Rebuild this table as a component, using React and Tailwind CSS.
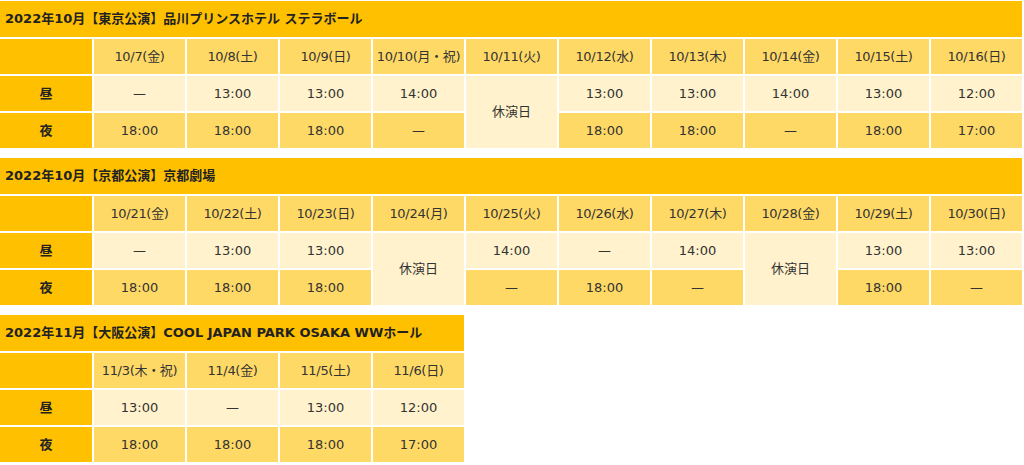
const tables = [
  {
    title: '2022年10月【東京公演】品川プリンスホテル ステラボール',
    cols: 'grid-cols-[92px_repeat(10,91px)]',
    width: 'w-[1022px]',
    dates: ['10/7(金)', '10/8(土)', '10/9(日)', '10/10(月・祝)', '10/11(火)', '10/12(水)', '10/13(木)', '10/14(金)', '10/15(土)', '10/16(日)'],
    day: ['—', '13:00', '13:00', '14:00', 'REST', '13:00', '13:00', '14:00', '13:00', '12:00'],
    night: ['18:00', '18:00', '18:00', '—', 'REST', '18:00', '18:00', '—', '18:00', '17:00'],
  },
  {
    title: '2022年10月【京都公演】京都劇場',
    cols: 'grid-cols-[92px_repeat(10,91px)]',
    width: 'w-[1022px]',
    dates: ['10/21(金)', '10/22(土)', '10/23(日)', '10/24(月)', '10/25(火)', '10/26(水)', '10/27(木)', '10/28(金)', '10/29(土)', '10/30(日)'],
    day: ['—', '13:00', '13:00', 'REST', '14:00', '—', '14:00', 'REST', '13:00', '13:00'],
    night: ['18:00', '18:00', '18:00', 'REST', '—', '18:00', '—', 'REST', '18:00', '—'],
  },
  {
    title: '2022年11月【大阪公演】COOL JAPAN PARK OSAKA WWホール',
    cols: 'grid-cols-[92px_repeat(4,91px)]',
    width: 'w-[464px]',
    dates: ['11/3(木・祝)', '11/4(金)', '11/5(土)', '11/6(日)'],
    day: ['13:00', '—', '13:00', '12:00'],
    night: ['18:00', '18:00', '18:00', '17:00'],
  },
]

const cell = 'flex items-center justify-center text-[13px] text-[#333] whitespace-nowrap'

function Schedule({ t }) {
  return (
    <div className={`grid ${t.cols} ${t.width} gap-[2px] bg-white mb-[10px]`}>
      <div className="col-span-full h-[36px] bg-[#ffc000] flex items-center pl-[5px] text-[13px] font-bold text-[#222]">
        {t.title}
      </div>

      <div className="h-[35px] bg-[#ffc000]"></div>
      {t.dates.map((d) => (
        <div key={d} className={`h-[35px] bg-[#ffd966] ${cell} tracking-[-0.3px]`}>
          {d}
        </div>
      ))}

      <div className="h-[35px] bg-[#ffc000] flex items-center justify-center text-[13px] font-bold text-[#222]">昼</div>
      {t.day.map((v, i) =>
        v === 'REST' ? (
          <div key={i} className={`row-span-2 bg-[#fff2cc] ${cell}`}>
            休演日
          </div>
        ) : (
          <div key={i} className={`h-[35px] bg-[#fff2cc] ${cell}`}>
            {v}
          </div>
        )
      )}

      <div className="h-[35px] bg-[#ffc000] flex items-center justify-center text-[13px] font-bold text-[#222]">夜</div>
      {t.night.map((v, i) =>
        v === 'REST' ? null : (
          <div key={i} className={`h-[35px] bg-[#ffd966] ${cell}`}>
            {v}
          </div>
        )
      )}
    </div>
  )
}

export default function App() {
  return (
    <div className="bg-white pt-[1px] font-['DejaVu_Sans','Noto_Sans_CJK_JP',sans-serif]">
      {tables.map((t) => (
        <Schedule key={t.title} t={t} />
      ))}
    </div>
  )
}
